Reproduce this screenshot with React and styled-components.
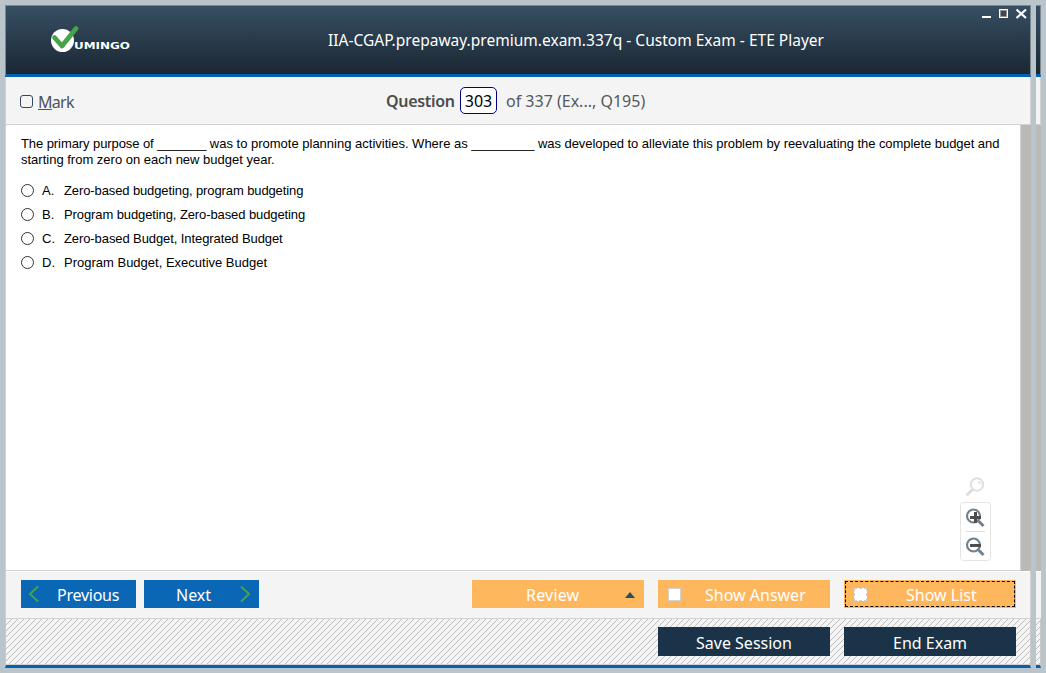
import React from "react";
import styled, { createGlobalStyle } from "styled-components";

const Global = createGlobalStyle`
  * { box-sizing: border-box; }
  body { margin: 0; background: #b9c5ca; overflow: hidden; font-family: "Noto Sans", "Open Sans", sans-serif; }
`;

const Desktop = styled.div`
  width: 1046px;
  height: 673px;
  padding: 5px;
  display: flex;
  gap: 5px;
  background: #b9c5ca;
`;

const Window = styled.main`
  width: ${(p) => p.$width}px;
  height: 663px;
  display: flex;
  flex-direction: column;
  overflow: hidden;
  flex: none;
`;

const Header = styled.header`
  height: 72px;
  flex: none;
  display: flex;
  align-items: flex-start;
  border: solid #7b8a90;
  border-width: 1px 1px 0 ${(p) => (p.$edge ? 0 : 1)}px;
  border-bottom: 3px solid #0460b4;
  background: linear-gradient(#374f63, #1a2733);
  background-clip: padding-box;
`;

const Logo = styled.svg`
  margin: 18px 0 0 42px;
  flex: none;
`;

const Title = styled.h1`
  margin: 23px 0 0 196px;
  width: 520px;
  font-size: 15.5px;
  line-height: 22px;
  font-weight: 400;
  letter-spacing: 0.015px;
  white-space: nowrap;
  color: #fff;
`;

const Controls = styled.svg`
  margin: 0 0 0 132px;
  flex: none;
`;

const Band = styled.div`
  height: ${(p) => p.$height}px;
  flex: none;
  display: flex;
  background: #f4f4f4;
  border: solid #d2d2d2;
  border-width: 0 1px 1px ${(p) => (p.$edge ? 0 : 1)}px;
`;

const Mark = styled.label`
  display: flex;
  width: 380px;
  padding: 14px 0 0 14px;
  font-size: 16px;
  line-height: 22px;
  letter-spacing: -0.7px;
  color: #4e5357;
`;

const MarkBox = styled.span`
  width: 13px;
  height: 13px;
  margin: 4px 5px 0 0;
  border: 1px solid #33495c;
  border-radius: 3px;
`;

const Counter = styled.div`
  display: flex;
  padding-top: 10px;
  font-size: 16px;
  line-height: 29px;
  color: #54585b;
  white-space: pre;
`;

const QuestionLabel = styled.span`
  width: 74px;
  font-weight: 600;
  letter-spacing: -0.3px;
  color: #4c4c4c;
`;

const NumberBox = styled.span`
  width: 37px;
  height: 27px;
  margin-right: 9px;
  border: 1px solid #000080;
  border-radius: 5px;
  background: #fff;
  color: #000;
  line-height: 27px;
  text-align: center;
`;

const Body = styled.section`
  height: 446px;
  flex: none;
  display: flex;
`;

const Page = styled.div`
  position: relative;
  width: 1016px;
  padding: 11px 0 0 15px;
  background: #fff;
  border: solid #d2d2d2;
  border-width: 0 1px 1px 1px;
  font-family: "Liberation Sans", Arial, sans-serif;
  font-size: 13px;
  color: #000;
`;

const Track = styled.div`
  flex: 1;
  background: #bab9b5;
`;

const Prompt = styled.p`
  margin: 0 0 10px;
  line-height: 16px;
  white-space: nowrap;
`;

const Line = styled.span`
  display: block;
`;

const Phrase = styled.span`
  letter-spacing: ${(p) => p.$spacing}px;
`;

const Option = styled.label`
  display: flex;
  align-items: center;
  height: 24px;
`;

const Radio = styled.span`
  width: 13px;
  height: 13px;
  margin-right: 8px;
  border: 1px solid #333;
  border-radius: 50%;
`;

const Letter = styled.span`
  width: 22px;
`;

const ZoomTools = styled.svg`
  position: absolute;
  right: 28px;
  bottom: 8px;
`;

const Toolbar = styled.div`
  height: 48px;
  flex: none;
  display: flex;
  padding: 9px 0 0 15px;
  background: #f4f4f4;
  border: solid #d2d2d2;
  border-width: 0 1px 1px ${(p) => (p.$edge ? 0 : 1)}px;
  box-shadow: inset 0 1px #fff;
`;

const Button = styled.button`
  display: flex;
  align-items: center;
  justify-content: flex-start;
  flex: none;
  width: ${(p) => p.$width}px;
  height: ${(p) => p.$height || 28}px;
  margin: 0 0 0 ${(p) => p.$gap || 0}px;
  padding: 2px 0 0;
  border: 0;
  border-radius: 0;
  background: ${(p) => p.$color};
  color: #fff;
  font: 16px "Noto Sans", "Open Sans", sans-serif;
  text-align: left;
  outline: ${(p) => (p.$focused ? "1px dashed #000" : "0")};
  outline-offset: -2px;
`;

const Caption = styled.span`
  flex: none;
  margin-left: ${(p) => p.$left}px;
  width: ${(p) => (p.$width ? `${p.$width}px` : "auto")};
  white-space: nowrap;
  letter-spacing: ${(p) => p.$spacing || 0}px;
`;

const Check = styled.span`
  flex: none;
  width: 13px;
  height: 13px;
  margin: -1px 0 0 10px;
  background: #fff;
  border: 1px ${(p) => (p.$dashed ? "dashed" : "solid")} #d2d2cf;
`;

const Chevron = styled.svg`
  margin: -2px 0 0 ${(p) => p.$left}px;
  flex: none;
`;

const Footer = styled.footer`
  height: 49px;
  flex: none;
  display: flex;
  padding: 8px 0 0 ${(p) => (p.$edge ? 0 : 652)}px;
  border: solid #c8c8c8;
  border-width: 0 1px 0 ${(p) => (p.$edge ? 0 : 1)}px;
  border-bottom: 3px solid #0460b4;
  box-shadow: inset 0 -1px #d2d2d2;
  background: url("data:image/svg+xml,%3Csvg xmlns='http://www.w3.org/2000/svg' width='6' height='6' shape-rendering='crispEdges'%3E%3Crect width='6' height='6' fill='%23f4f4f4'/%3E%3Cpath d='M0 5h1v1H0zM1 4h1v1H1zM2 3h1v1H2zM3 2h1v1H3zM4 1h1v1H4zM5 0h1v1H5z' fill='%23bebebe'/%3E%3C/svg%3E");
`;

const options = [
  ["A.", "Zero-based budgeting, program budgeting", -0.11],
  ["B.", "Program budgeting, Zero-based budgeting", -0.1],
  ["C.", "Zero-based Budget, Integrated Budget", -0.09],
  ["D.", "Program Budget, Executive Budget", 0],
];

export default function App() {
  return (
    <>
      <Global />
      <Desktop>
        <Window $width={1026}>
          <Header>
            <Logo width="84" height="30" viewBox="48 24 84 30">
              <circle cx="62.5" cy="40.5" r="11.5" fill="#fff" />
              <path d="M54.5 37.5 62 46 76 28.5" fill="none" stroke="#45a447" strokeWidth="4.8" strokeLinecap="round" strokeLinejoin="round" />
              <text x="74" y="48.8" fill="#fff" fontFamily="DejaVu Sans" fontWeight="700" fontSize="9.5" textLength="56" lengthAdjust="spacingAndGlyphs">UMINGO</text>
            </Logo>
            <Title>IIA-CGAP.prepaway.premium.exam.337q - Custom Exam - ETE Player</Title>
            <Controls width="50" height="16" viewBox="980 6 50 16" shapeRendering="crispEdges">
              <path d="M982 16h9v2h-9z" fill="#fff" />
              <path d="M999.5 9.5h8v8h-8z" fill="none" stroke="#fff" />
              <path d="M1000.5 10.5h6v6h-6z" fill="none" stroke="#9b8f88" />
              <path d="M1016.5 9.5l9.500 8.500M1026 9.500l-9.500 8.500" stroke="#fff" strokeWidth="2.2" shapeRendering="auto" />
            </Controls>
          </Header>
          <Band $height={48}>
            <Mark><MarkBox /><span><u>M</u>ark</span></Mark>
            <Counter>
              <QuestionLabel>Question</QuestionLabel>
              <NumberBox>303</NumberBox>
              <span>of 337 (Ex..., Q195)</span>
            </Counter>
          </Band>
          <Body>
            <Page>
              <Prompt>
                <Line>
                  <Phrase $spacing={-0.08}>The primary purpose of </Phrase>
                  <Phrase $spacing={-0.23}>_______</Phrase>
                  <Phrase $spacing={0}> was to promote planning activities. Where as </Phrase>
                  <Phrase $spacing={-0.23}>_________</Phrase>
                  <Phrase $spacing={-0.05}> was developed to alleviate this problem by reevaluating the complete budget and</Phrase>
                </Line>
                <Line>starting from zero on each new budget year.</Line>
              </Prompt>
              {options.map(([letter, text, spacing]) => (
                <Option key={letter}>
                  <Radio />
                  <Letter>{letter}</Letter>
                  <Phrase $spacing={spacing}>{text}</Phrase>
                </Option>
              ))}
              <ZoomTools width="33" height="88" viewBox="959 474 33 88" fill="none">
                <circle cx="977" cy="484.5" r="6.2" stroke="#dedede" strokeWidth="2" />
                <path d="M978 481.5q2 .5 2.5 2.5" stroke="#dedede" strokeWidth="1.5" />
                <path d="M972.5 489.5l-6 6" stroke="#dedede" strokeWidth="3" />
                <rect x="960.5" y="502.5" width="30" height="58" rx="3" stroke="#e4e4e4" />
                <path d="M966 531.5h19" stroke="#dedede" />
                <circle cx="973.5" cy="516" r="6.5" stroke="#71828e" strokeWidth="2.2" />
                <path d="M978.5 521l5 5" stroke="#71828e" strokeWidth="3" />
                <path d="M970 517.5h11M975.5 512v11" stroke="#4d4d4d" strokeWidth="3" />
                <circle cx="973.5" cy="545" r="6.5" stroke="#71828e" strokeWidth="2.2" />
                <path d="M978.5 550l5 5" stroke="#71828e" strokeWidth="3" />
                <path d="M970 545.5h11" stroke="#4d4d4d" strokeWidth="3" />
              </ZoomTools>
            </Page>
            <Track />
          </Body>
          <Toolbar>
            <Button $width={115} $color="#0a67b5">
              <Chevron $left={7} width="12" height="18" viewBox="0 0 12 18"><path d="M10 1.5 2 9l8 7.5" fill="none" stroke="#45a447" strokeWidth="2" /></Chevron>
              <Caption $left={17} $spacing={-0.25}>Previous</Caption>
            </Button>
            <Button $width={115} $gap={8} $color="#0a67b5">
              <Caption $left={32} $width={63}>Next</Caption>
              <Chevron $left={0} width="12" height="18" viewBox="0 0 12 18"><path d="M2 1.5 10 9l-8 7.5" fill="none" stroke="#45a447" strokeWidth="2" /></Chevron>
            </Button>
            <Button $width={172} $gap={213} $color="#ffb75d">
              <Caption $left={54} $width={99} $spacing={0.2}>Review</Caption>
              <svg width="10" height="6"><path d="M0 6 5 0l5 6z" fill="#33495c" /></svg>
            </Button>
            <Button $width={172} $gap={14} $color="#ffb75d">
              <Check /><Caption $left={24}>Show Answer</Caption>
            </Button>
            <Button $width={172} $gap={14} $color="#ffb75d" $focused>
              <Check $dashed /><Caption $left={39}>Show List</Caption>
            </Button>
          </Toolbar>
          <Footer>
            <Button $width={172} $height={29} $color="#1a3348"><Caption $left={38}>Save Session</Caption></Button>
            <Button $width={172} $height={29} $gap={14} $color="#1a3348"><Caption $left={49}>End Exam</Caption></Button>
          </Footer>
        </Window>
        <Window $width={5}>
          <Header $edge />
          <Band $height={48} $edge />
          <Body><Track /></Body>
          <Toolbar $edge />
          <Footer $edge />
        </Window>
      </Desktop>
    </>
  );
}
